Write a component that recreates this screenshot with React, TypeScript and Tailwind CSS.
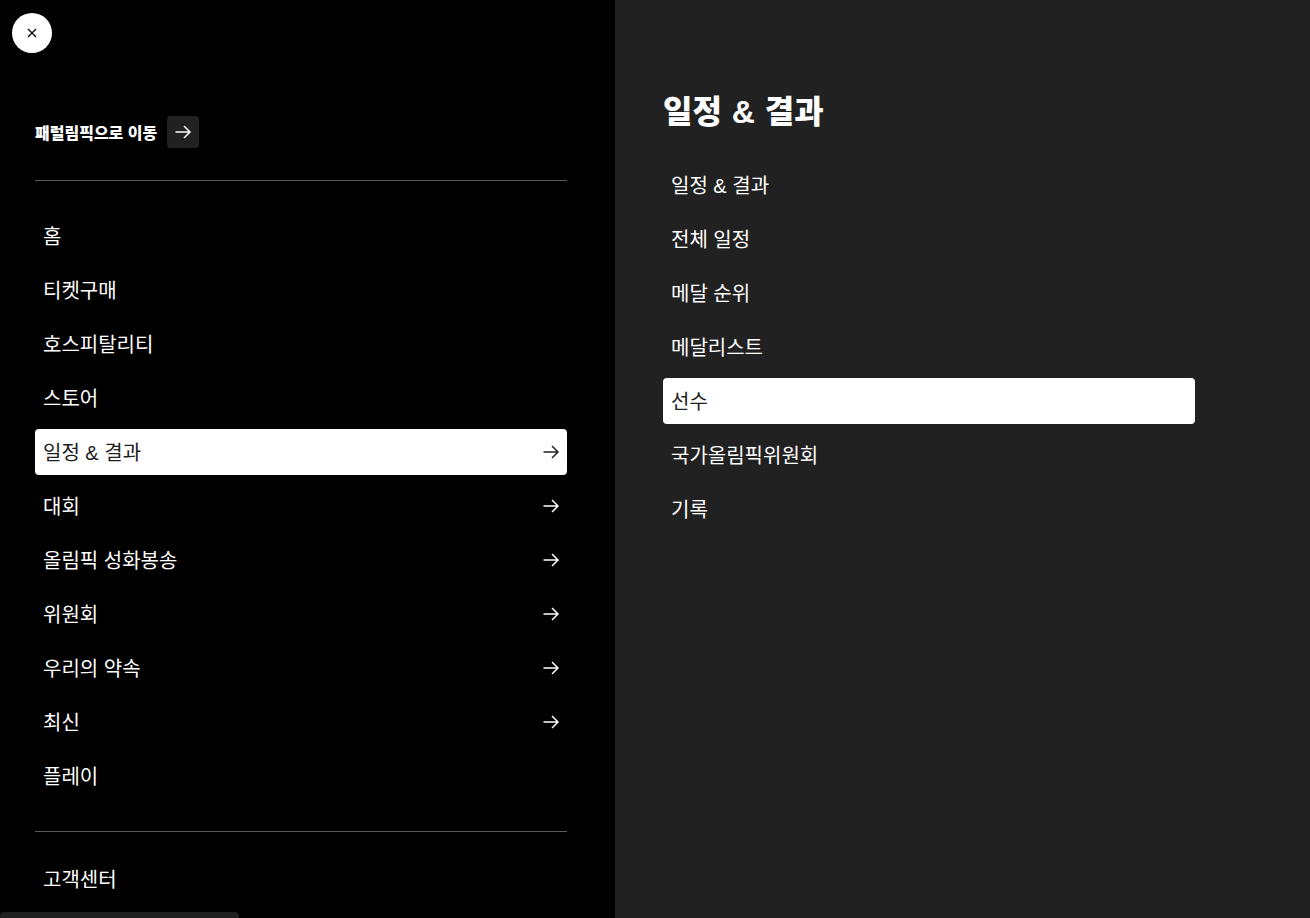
import React from "react";

function Arrow({ className }: { className?: string }) {
  return (
    <svg width="16" height="14" viewBox="0 0 16 14" fill="none" stroke="currentColor" strokeWidth="1.5" className={className}>
      <path d="M0.5 7H15M9 1L15 7L9 13" />
    </svg>
  );
}

function Row({ label, arrow, active }: { label: string; arrow?: boolean; active?: boolean }) {
  return (
    <div className={`h-[46px] shrink-0 rounded-[4px] px-2 flex items-center justify-between text-[20px] ${active ? "bg-white text-[#212121]" : "text-white"}`}>
      <span className="pt-[2px]">{label}</span>
      {arrow && <Arrow />}
    </div>
  );
}

const left: [string, boolean, boolean][] = [
  ["홈", false, false],
  ["티켓구매", false, false],
  ["호스피탈리티", false, false],
  ["스토어", false, false],
  ["일정 & 결과", true, true],
  ["대회", true, false],
  ["올림픽 성화봉송", true, false],
  ["위원회", true, false],
  ["우리의 약속", true, false],
  ["최신", true, false],
  ["플레이", false, false],
];

const right = ["일정 & 결과", "전체 일정", "메달 순위", "메달리스트", "선수", "국가올림픽위원회", "기록"];

export default function App() {
  return (
    <div className="relative flex h-[918px] w-[1310px] overflow-hidden bg-black font-['Liberation_Sans','Noto_Sans_CJK_KR',sans-serif]">
      <div className="flex w-[615px] shrink-0 flex-col bg-black px-[35px]">
        <div className="h-[116px] shrink-0" />
        <div className="flex h-[32px] shrink-0 items-center gap-[10px] text-white">
          <span className="pt-[4px] text-[16px] font-black">패럴림픽으로 이동</span>
          <span className="flex h-[32px] w-[32px] items-center justify-center rounded-[4px] bg-[#212121]">
            <Arrow />
          </span>
        </div>
        <div className="mt-[32px] h-px w-[532px] shrink-0 bg-[#5c5c5c]" />
        <div className="mt-[32px] flex w-[532px] flex-col gap-[8px]">
          {left.map(([l, a, act]) => (
            <Row key={l} label={l} arrow={a} active={act} />
          ))}
        </div>
        <div className="mt-[32px] h-px w-[532px] shrink-0 bg-[#5c5c5c]" />
        <div className="mt-[24px] w-[532px]">
          <Row label="고객센터" />
        </div>
      </div>
      <div className="flex flex-1 flex-col bg-[#212121] pl-[48px] pt-[89px]">
        <div className="h-[46px] text-[32px] font-black leading-[46px] text-white [word-spacing:1px]">일정 & 결과</div>
        <div className="mt-[27px] flex w-[532px] flex-col gap-[8px]">
          {right.map((l) => (
            <Row key={l} label={l} active={l === "선수"} />
          ))}
        </div>
      </div>
      <button className="absolute left-[12px] top-[13px] flex h-[40px] w-[40px] items-center justify-center rounded-full bg-white text-black">
        <svg width="10" height="10" viewBox="0 0 10 10" stroke="currentColor" strokeWidth="1.3" fill="none">
          <path d="M1 1L9 9M9 1L1 9" />
        </svg>
      </button>
      <div className="absolute left-0 top-[912px] h-[30px] w-[239px] rounded-[4px] bg-[#212121]" />
    </div>
  );
}
